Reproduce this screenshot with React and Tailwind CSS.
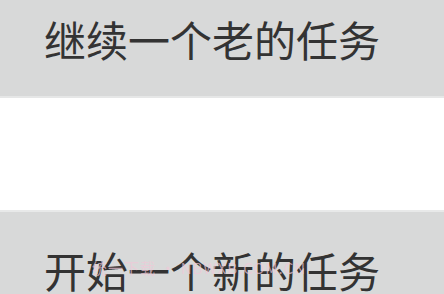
export default function App() {
  const font = { fontFamily: '"Noto Sans CJK SC", "Noto Sans", sans-serif' };
  return (
    <div className="w-[444px] h-[294px] overflow-hidden bg-white flex flex-col" style={font}>
      <div className="-mt-[19px] h-[117px] shrink-0 bg-[#d8d9d9] border-b-2 border-[#e6e7e7] flex items-center pl-[44px]">
        <span className="text-[42px] leading-none text-[#333333]">继续一个老的任务</span>
      </div>
      <div className="h-[112px] shrink-0 bg-white" />
      <div className="h-[117px] shrink-0 bg-[#d8d9d9] border-t-2 border-[#e8e9e9] flex items-center pl-[44px] relative">
        <span className="text-[42px] leading-none text-[#333333]">开始一个新的任务</span>
        <span className="absolute left-[92px] top-[48px] text-[15px] leading-none tracking-[1px] text-[#f0c8d8]/70">
          统一下载 · NBWXB.COM.CN
        </span>
      </div>
    </div>
  );
}
